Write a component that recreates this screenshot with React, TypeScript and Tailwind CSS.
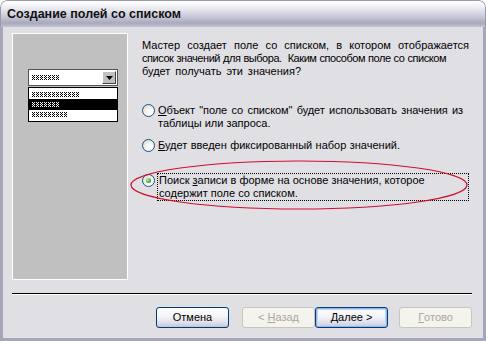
import React from "react";

function Radio({ checked }: { checked?: boolean }) {
  return (
    <div className="w-[13px] h-[13px] shrink-0 rounded-full border border-[#1c5180] bg-[radial-gradient(circle_at_65%_70%,#ffffff_20%,#e4e2dc_70%,#cfcdc4)] flex items-center justify-center">
      {checked && (
        <div className="w-[5px] h-[5px] rounded-full bg-[radial-gradient(circle_at_35%_35%,#b4f5a8,#21a121_70%)]" />
      )}
    </div>
  );
}

function Hatch({ w, id }: { w: number; id: string }) {
  return (
    <svg width={w} height={5} className="block">
      <defs>
        <pattern id={id} width="4" height="5" patternUnits="userSpaceOnUse">
          <rect x="0" y="0" width="3" height="5" fill="currentColor" />
          <rect x="1" y="0" width="1" height="1" fill="var(--bgc)" />
          <rect x="0" y="1" width="1" height="1" fill="var(--bgc)" />
          <rect x="2" y="1" width="1" height="1" fill="var(--bgc)" />
          <rect x="1" y="2" width="1" height="1" fill="var(--bgc)" />
          <rect x="0" y="3" width="1" height="1" fill="var(--bgc)" />
          <rect x="2" y="3" width="1" height="1" fill="var(--bgc)" />
          <rect x="1" y="4" width="1" height="1" fill="var(--bgc)" />
        </pattern>
      </defs>
      <rect width={w} height={5} fill={`url(#${id})`} />
    </svg>
  );
}

function Btn({
  children,
  disabled,
  def,
}: {
  children: React.ReactNode;
  disabled?: boolean;
  def?: boolean;
}) {
  if (disabled)
    return (
      <div className="w-[73px] h-[21px] rounded-[3px] border border-[#c9c7ba] bg-[#f4f3ee] text-[#aca899] flex items-center justify-center whitespace-pre">
        {children}
      </div>
    );
  return (
    <div
      className={
        "w-[73px] h-[21px] rounded-[3px] border border-[#003c74] bg-[linear-gradient(#ffffff,#f4f4f8_45%,#dcdde8_80%,#c3c6d8)] text-black flex items-center justify-center whitespace-pre " +
        (def ? "shadow-[inset_0_0_0_1px_#97b7ec,inset_0_0_0_2px_#c2d4f2]" : "")
      }
    >
      {children}
    </div>
  );
}

export default function App() {
  return (
    <div className="relative w-[486px] h-[341px] overflow-hidden rounded-t-[7px] font-['Liberation_Sans',sans-serif] text-[11px] leading-[13px] text-black">
      {/* title bar */}
      <div className="h-[27px] rounded-t-[7px] border border-b-0 border-[#9a9aae] bg-[linear-gradient(#ffffff,#f2f2f6_20%,#cfcfdc_55%,#a9a9be_85%,#c4c4d2)] flex items-center pl-[6px]">
        <span className="font-bold text-[12.5px] text-[#111]">Создание полей со списком</span>
      </div>
      {/* body */}
      <div className="h-[314px] border-x-[3px] border-b-[3px] border-[#a6a6ba] bg-[#e0dfe4] flex flex-col">
        <div className="flex pt-[6px] pl-[9px] gap-[14px]">
          {/* picture panel */}
          <div className="w-[116px] h-[247px] shrink-0 bg-[#c0c0c0] border border-white pt-[35px] pl-[15px]">
            <div className="w-[90px] h-[17px] bg-white border border-[#555] flex items-center justify-between pl-[3px] pr-[1px] [--bgc:#ffffff]">
              <Hatch w={28} id="h0" />
              <div className="w-[14px] h-[13px] bg-[#c0c0c0] border border-t-white border-l-white border-r-[#404040] border-b-[#404040] flex items-center justify-center">
                <svg width="7" height="4">
                  <path d="M0 0h7L3.5 4z" fill="#000" />
                </svg>
              </div>
            </div>
            <div className="mt-[1px] w-[90px] h-[35px] bg-white border border-black flex flex-col py-[1px]">
              <div className="h-[11px] flex items-center pl-[3px] [--bgc:#ffffff]">
                <Hatch w={47} id="h1" />
              </div>
              <div className="h-[11px] flex items-center pl-[3px] bg-black text-white [--bgc:#000000]">
                <Hatch w={27} id="h2" />
              </div>
              <div className="h-[11px] flex items-center pl-[3px] [--bgc:#ffffff]">
                <Hatch w={35} id="h3" />
              </div>
            </div>
          </div>
          {/* text column */}
          <div className="flex flex-col w-[330px] whitespace-nowrap">
            <div className="mt-[6px]">
              <div className="w-[327px] [text-align-last:justify]">
                Мастер создает поле со списком, в котором отображается
              </div>
              <div className="w-[304px] tracking-[-0.45px] [text-align-last:justify]">
                {"список значений для выбора.\u00a0 Каким способом поле со списком"}
              </div>
              <div className="w-[159px] [text-align-last:justify]">будет получать эти значения?</div>
            </div>
            <div className="mt-[26px] flex items-start gap-[3px]">
              <Radio />
              <div>
                <div className="w-[305px] tracking-[-0.1px] [text-align-last:justify]">
                  <span className="underline">О</span>
                  {'бъект "поле со списком" будет использовать значения из'}
                </div>
                <div className="w-[110px] [text-align-last:justify]">таблицы или запроса.</div>
              </div>
            </div>
            <div className="mt-[9px] flex items-start gap-[3px]">
              <Radio />
              <div className="w-[242px] [text-align-last:justify]">
                <span className="underline">Б</span>
                {"удет введен фиксированный набор значений."}
              </div>
            </div>
            <div className="mt-[21px] flex items-start gap-[2px]">
              <div className="mt-[1px]">
                <Radio checked />
              </div>
              <div className="w-[312px] border border-dotted border-black pl-[1px]">
                <div className="w-[262px] [text-align-last:justify]">
                  {"Поиск "}
                  <span className="underline">з</span>
                  {"аписи в форме на основе значения, которое"}
                </div>
                <div className="w-[135px] [text-align-last:justify]">содержит поле со списком.</div>
              </div>
            </div>
          </div>
        </div>
        {/* separator */}
        <div className="mt-[13px] ml-[9px] w-[460px] h-[1px] bg-black" />
        <div className="h-[1px] ml-[9px] w-[460px] bg-white" />
        {/* buttons */}
        <div className="mt-[12px] ml-[153px] flex">
          <Btn>Отмена</Btn>
          <div className="ml-[13px]">
            <Btn disabled>
              <span>{"< "}</span>
              <span className="underline">Н</span>
              <span>азад</span>
            </Btn>
          </div>
          <Btn def>
            <span className="underline">Д</span>
            <span>{"алее >"}</span>
          </Btn>
          <div className="ml-[11px]">
            <Btn disabled>
              <span className="underline">Г</span>
              <span>отово</span>
            </Btn>
          </div>
        </div>
      </div>
      {/* red annotation ellipse */}
      <svg className="absolute left-0 top-0 pointer-events-none" width="486" height="341">
        <ellipse cx="299" cy="185" rx="168" ry="24" fill="none" stroke="#d0102c" strokeWidth="1.2" />
      </svg>
    </div>
  );
}
